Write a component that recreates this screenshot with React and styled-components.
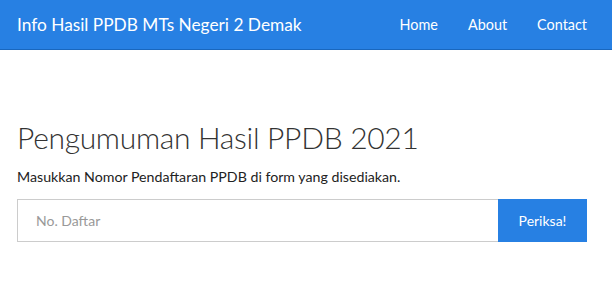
import React from 'react'
import styled, { createGlobalStyle } from 'styled-components'

const GlobalStyle = createGlobalStyle`
    body {
        margin: 0;
        background: #fff;
        font-family: Lato, "Noto Sans", sans-serif;
        font-size: 14px;
        color: #333;
    }
`
const Navbar = styled.nav`
    display: flex;
    justify-content: space-between;
    align-items: center;
    height: 49px;
    background-color: #2780e3;
    border-bottom: 1px solid #1967be;
    padding: 0 10px 0 17px;
`
const Brand = styled.a`
    font-size: 17.3px;
    color: #fff;
    text-decoration: none;
`
const NavList = styled.ul`
    display: flex;
    list-style: none;
    margin: 0;
    padding: 0;
`
const NavLink = styled.a`
    display: block;
    padding: 0 15px;
    font-size: 14.4px;
    color: #fff;
    text-decoration: none;
`
const Main = styled.main`
    padding: 71px 25px 0 17px;
`
const Title = styled.h2`
    margin: 0;
    font-size: 30px;
    font-weight: 300;
    letter-spacing: -0.3px;
    line-height: 33px;
    color: #333;
`
const Lead = styled.p`
    margin: 14px 0 14px;
    font-size: 14.2px;
    line-height: 17px;
    color: #222;
`
const InputGroup = styled.form`
    display: flex;
    height: 43px;
`
const Input = styled.input`
    flex: 1;
    min-width: 0;
    box-sizing: border-box;
    border: 1px solid #ccc;
    border-right: none;
    padding: 0 18px;
    font-family: inherit;
    font-size: 14px;
    color: #333;
    outline: none;
    &::placeholder {
        color: #999;
    }
`
const Button = styled.button`
    width: 89px;
    border: none;
    background-color: #2780e3;
    color: #fff;
    font-family: inherit;
    font-size: 14px;
    cursor: pointer;
`

function App() {
    return (
        <>
            <GlobalStyle />
            <Navbar>
                <Brand href="#">Info Hasil PPDB MTs Negeri 2 Demak</Brand>
                <NavList>
                    <li><NavLink href="#">Home</NavLink></li>
                    <li><NavLink href="#">About</NavLink></li>
                    <li><NavLink href="#">Contact</NavLink></li>
                </NavList>
            </Navbar>
            <Main>
                <Title>Pengumuman Hasil PPDB 2021</Title>
                <Lead>Masukkan Nomor Pendaftaran PPDB di form yang disediakan.</Lead>
                <InputGroup onSubmit={e => e.preventDefault()}>
                    <Input type="text" placeholder="No. Daftar" />
                    <Button type="submit">Periksa!</Button>
                </InputGroup>
            </Main>
        </>
    )
}

export default App
